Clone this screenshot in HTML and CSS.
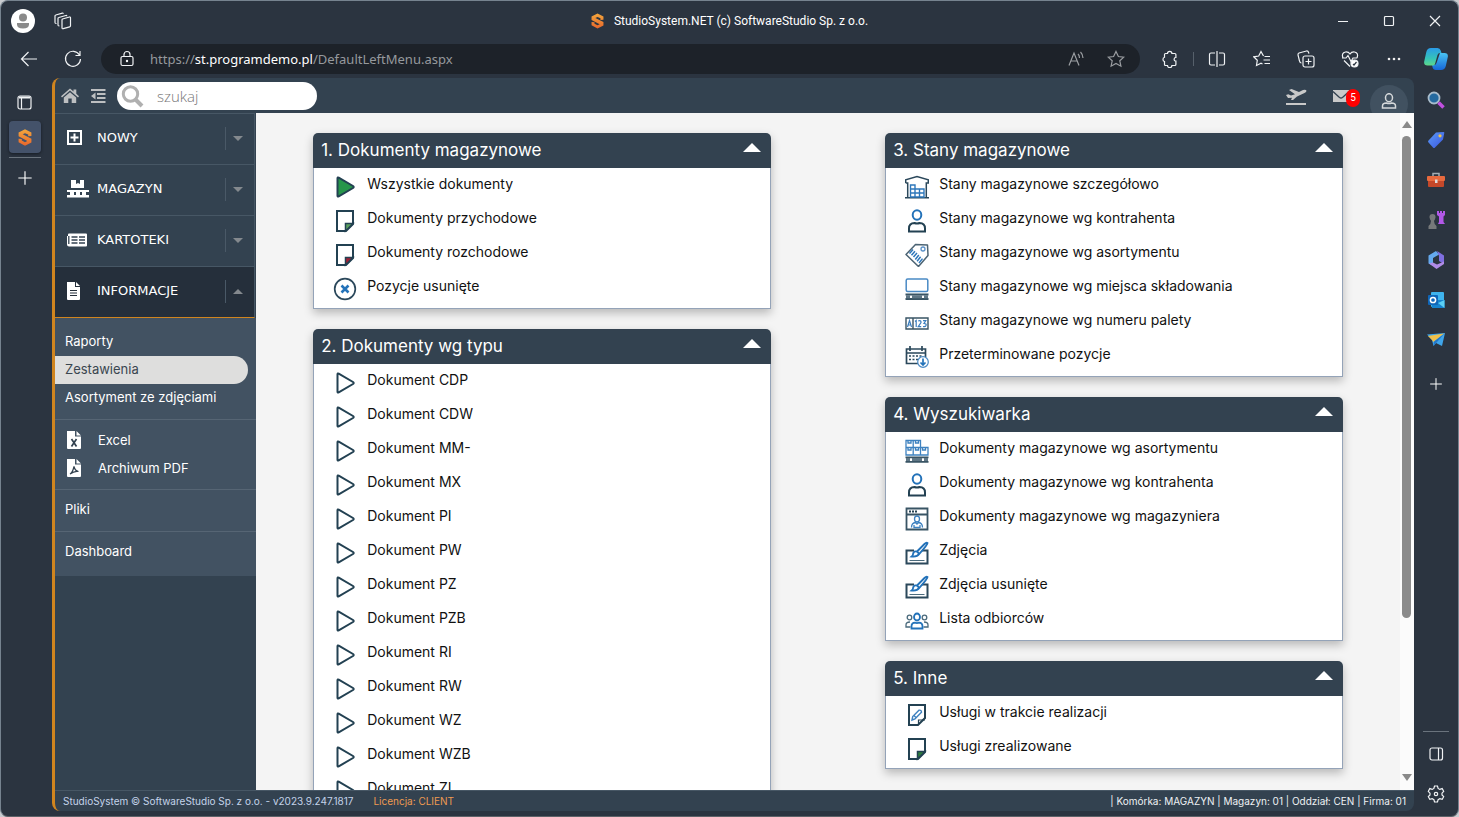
FILE: index.html
```html
<!DOCTYPE html>
<html lang="pl">
<head>
<meta charset="utf-8">
<title>StudioSystem.NET (c) SoftwareStudio Sp. z o.o.</title>
<link rel="stylesheet" href="styles.css">
</head>
<body>
<svg class="sprite" aria-hidden="true">
  <defs>
    <linearGradient id="gs" x1="0" y1="0" x2="0" y2="1"><stop offset="0" stop-color="#f3a73c"/><stop offset="1" stop-color="#e8662c"/></linearGradient>
    <linearGradient id="gcop1" x1="0" y1="0" x2="0" y2="1"><stop offset="0" stop-color="#2a9be8"/><stop offset=".6" stop-color="#35c3b8"/><stop offset="1" stop-color="#5fd88a"/></linearGradient>
    <linearGradient id="gcop2" x1="0" y1="0" x2="0" y2="1"><stop offset="0" stop-color="#49c4f2"/><stop offset="1" stop-color="#1667d8"/></linearGradient>
    <linearGradient id="gtag" x1="0" y1="0" x2="1" y2="1"><stop offset="0" stop-color="#5b9bf5"/><stop offset="1" stop-color="#3b55e0"/></linearGradient>
  </defs>
  <symbol id="logo" viewBox="0 0 24 28"><path fill="url(#gs)" d="M12 0l11 5.500v6l-5.500.5V9L12 6.500 8 8.500 23 16v6.500L12 28 1 22v-6l5.500.5V19l5.500 3 4-2L1 12V5.500z"/></symbol>
  <symbol id="play" viewBox="0 0 24 24"><path d="M4.500 3.300v17.400q0 1.300 1.200.6L20 13q1.400-1 0-2L5.700 2.700q-1.200-.7-1.200.6z" stroke="#234152" stroke-width="2"/></symbol>
  <symbol id="note" viewBox="0 0 24 24"><path fill="#fff" stroke="#234152" stroke-width="2" d="M4 2h16v13l-7 7H4z"/><path d="M12.500 22v-7.500H20z" stroke="#234152" stroke-width="1.500"/></symbol>
  <symbol id="cross" viewBox="0 0 24 24"><circle cx="12" cy="12" r="10.300" fill="none" stroke="#2b485b" stroke-width="1.700"/><path d="M8.500 8.500l7 7m0-7l-7 7" stroke="#2372b9" stroke-width="2.600"/></symbol>
  <symbol id="store" viewBox="0 0 24 24"><g fill="none"><path d="M.7 8V4.800L12 1.500l11.300 3.300V8h-2v14.500M.7 8h2v14.500M0 22.800h24" stroke="#2b485b" stroke-width="1.500"/><path d="M5.500 22V10h4.500v4h9v8zM10 14v8M14.500 14v8M5.500 14H10M5.500 18H19" stroke="#2e77ba" stroke-width="1.400"/></g></symbol>
  <symbol id="person" viewBox="0 0 24 24"><g fill="none" stroke-width="2"><ellipse cx="12" cy="6" rx="4.300" ry="4.700" stroke="#2372b9"/><path stroke="#234152" d="M4 22.500v-3q0-5.500 5.500-5.500 2.500 1.200 5 0 5.500 0 5.500 5.500v3z"/></g></symbol>
  <symbol id="tag" viewBox="0 0 24 24"><g fill="none"><path stroke="#4c6474" stroke-width="1.500" stroke-linejoin="round" d="M1 11.500L10.500 1.500l12 .5.500 10.500L13.500 23.500z"/><circle cx="18" cy="6" r="2" stroke="#5b91c8" stroke-width="1.300"/><path stroke="#2e77ba" stroke-width="1.500" d="M8 6.500l-3.500 4M10 8.300l-3.500 4M12 10l-3.500 4M13.800 12l-3.500 4.500M15.600 13.800l-3.500 4.500M17.500 15.600l-3.500 4.400"/></g></symbol>
  <symbol id="pallet" viewBox="0 0 24 24"><rect x="1.200" y="2" width="21.600" height="12.500" rx="1.500" fill="none" stroke="#4a8ac5" stroke-width="1.500"/><path stroke="#395464" d="M.5 17.500h23M.5 22h23" stroke-width="1.900"/><path stroke="#5f7685" stroke-width="3" d="M1 19.800h4M7 19.800h10M19 19.800h4"/></symbol>
  <symbol id="number" viewBox="0 0 24 24"><path fill="none" stroke="#395464" stroke-width="1.400" d="M1 7h22v11H1zM8 7v11"/><g fill="none" stroke="#3b7ebe" stroke-width="1.200"><path d="M2.500 16l2-6.500 2 6.500M3 14h3M10 10.500l1.200-1V16M13.200 10q3-1 2.800 1.500l-2.800 4.200h3M18 9.700h2.800L19 12.500q2.800 0 2 2-.7 1.600-3 1"/></g></symbol>
  <symbol id="calendar" viewBox="0 0 24 24"><g fill="none"><path stroke="#2b485b" stroke-width="1.700" d="M14 18.500H1.500V4h19v8M1.500 8h19M5 1v5M17 1v5"/><path stroke="#2b485b" stroke-width="1.700" stroke-dasharray="2 1.500" d="M4 11h14M4 14.500h9"/><circle cx="18" cy="17" r="5.300" fill="#fff" stroke="#4a8ac5" stroke-width="1.200"/><path stroke="#2372b9" stroke-width="1.700" d="M18 13.500V20M15.500 17.500L18 20l2.500-2.500"/></g></symbol>
  <symbol id="boxes" viewBox="0 0 24 24"><g fill="none"><path stroke="#3e82c0" stroke-width="1.300" d="M1 1.500h14.500v7H1zM1 8.500h22V16H1zM8.200 1.500V16M15.500 8.500V16M3 2v2h3V2M10.500 2v2h3V2M3 9v2h3V9M10.500 9v2h3V9M17.500 9v2h3V9"/><path stroke="#395464" stroke-width="1.700" d="M.5 18.300h23M.5 22.800h23"/><path stroke="#5f7685" stroke-width="3" d="M1 20.600h4M7 20.600h10M19 20.600h4"/></g></symbol>
  <symbol id="window" viewBox="0 0 24 24"><g fill="none"><path stroke="#395464" stroke-width="1.800" d="M1.500 1.500h21v21h-21zM1.500 7.500h21"/><path stroke="#234152" stroke-width="2" stroke-dasharray="2 1" d="M4 4.500h8"/><ellipse cx="12" cy="12" rx="2.500" ry="3" stroke="#3e82c0" stroke-width="1.300"/><path stroke="#3e82c0" stroke-width="1.300" d="M6.500 20.500q0-4.500 4-5l1.500 1.500 1.500-1.500q4 .5 4 5M9 18v2.500h6V18"/></g></symbol>
  <symbol id="photo" viewBox="0 0 24 24"><g fill="none"><path stroke="#2b485b" stroke-width="2" d="M9 9.500H1.500v13h21v-13H17"/><path stroke="#4a6a7c" d="M4.500 19.500h15"/><path stroke="#2372b9" stroke-width="1.900" d="M12 10.500L19.500 3q1.800-1.800 3-1 .3 1.500-8.200 10.800zM12 10.500q-3.300-.7-3.800 2-.2 2-1.500 3 5.500.7 7.500-2.700z"/></g></symbol>
  <symbol id="group" viewBox="0 0 24 24"><g fill="none"><g stroke="#4a6a7c" stroke-width="1.300"><circle cx="4.500" cy="8.500" r="2.300"/><circle cx="19.500" cy="8.500" r="2.300"/><path d="M5.500 18H1v-2q0-3 4-3M18.500 18H23v-2q0-3-4-3"/></g><g stroke="#2372b9" stroke-width="1.800"><ellipse cx="12" cy="8" rx="3" ry="3.500"/><path d="M6.500 19.500v-2q0-3.800 3.500-3.800 2 .8 4 0 3.500 0 3.500 3.800v2z"/></g></g></symbol>
  <symbol id="edit" viewBox="0 0 24 24"><g fill="none"><path stroke="#234152" stroke-width="2" d="M4 2h16v13l-7 7H4z"/><path stroke="#234152" stroke-width="1.200" d="M13.500 22v-5H20"/><path stroke="#3e82c0" stroke-width="1.400" d="M7 17l.7-3.500L14 7.200q2.500-.5 2.500 2L10 15.800zM9 12.500l2.200 2.200"/></g></symbol>
  <symbol id="plus" viewBox="0 0 24 24"><path fill="none" stroke="currentColor" stroke-width="1.700" d="M12 2v20M2 12h20"/></symbol>
</svg>

<div class="window">
  <header class="titlebar">
    <div class="title-left">
      <button class="avatar" aria-label="Profil"><svg viewBox="0 0 24 24"><circle cx="12" cy="8.500" r="4" fill="#8a8a8a"/><path fill="#8a8a8a" d="M6 14h12v1.500q0 4-6 4t-6-4z"/></svg></button>
      <button class="plain" aria-label="Obszary robocze"><svg class="i18 line" viewBox="0 0 18 18"><path d="M8.500 7l7-2q1-.2 1 .8v8q0 .8-.8 1l-6.500 1.900q-1.200.3-1.200-.9V8q0-.8.500-1zM5.500 14l-1-.3q-.5-.2-.5-1V6.500q0-.8.800-1l7-2q1-.2 1 .7M2.500 11.500l-1-.3q-.5-.2-.5-1V4q0-.8.800-1l6.500-1.900q1-.2 1 .7"/></svg></button>
    </div>
    <div class="title-mid"><svg class="title-logo"><use href="#logo"/></svg><span>StudioSystem.NET (c) SoftwareStudio Sp. z o.o.</span></div>
    <div class="title-right">
      <button class="plain" aria-label="Minimalizuj"><svg class="i12 line" viewBox="0 0 12 12"><path d="M1 6.500h10"/></svg></button>
      <button class="plain" aria-label="Maksymalizuj"><svg class="i12 line" viewBox="0 0 12 12"><rect x="1.500" y="1.500" width="9" height="9" rx="1"/></svg></button>
      <button class="plain" aria-label="Zamknij"><svg class="i12 line" viewBox="0 0 12 12"><path d="M1 1l10 10M11 1L1 11"/></svg></button>
    </div>
  </header>

  <nav class="toolbar">
    <button class="plain" aria-label="Wstecz"><svg class="i18 line" viewBox="0 0 18 18"><path d="M17 9H2M8.500 2L1.500 9l7 7"/></svg></button>
    <button class="plain" aria-label="Odśwież"><svg class="i18 line" viewBox="0 0 18 18"><path d="M15.500 5A7.500 7.500 0 1 0 16.500 9M16 1v4.500h-4.500"/></svg></button>
    <div class="address">
      <svg class="i18 line" viewBox="0 0 18 18"><rect x="3" y="6.500" width="12" height="9" rx="1.500"/><path d="M6 6.500V4.500a3 3 0 0 1 6 0v2"/><circle cx="9" cy="11" r=".6"/></svg>
      <div class="url">https://<b>st.programdemo.pl</b>/DefaultLeftMenu.aspx</div>
      <svg class="i18 line dim" viewBox="0 0 18 18"><path d="M2 15.500L7 3l5 12.500M3.800 11h6.400M11 4q1.500 1.500 1.500 4M13.500 2q2.500 2.500 2.500 6"/></svg>
      <svg class="i18 line dim" viewBox="0 0 18 18"><path d="M9 1.500l2.400 5 5.400.6-4 3.700 1.100 5.400L9 13.500l-4.900 2.700 1.100-5.400-4-3.700 5.400-.6z"/></svg>
    </div>
    <div class="tools">
      <button class="plain ext" aria-label="Rozszerzenia"><svg class="i18 line" viewBox="0 0 18 18"><path d="M6.500 3.500a2.200 2.200 0 0 1 4.400 0h3q1 0 1 1v3a1.800 1.800 0 1 0 0 3.600v3.400q0 1-1 1h-3a2.200 2.200 0 0 1-4.400 0h-2q-1 0-1-1v-3a2.200 2.200 0 0 1 0-4.200V4.500q0-1 1-1z"/></svg></button>
      <button class="plain" aria-label="Podziel ekran"><svg class="i18 line" viewBox="0 0 18 18"><path d="M7 3H3q-1.500 0-1.500 1.500v9Q1.500 15 3 15h4M11 3h4q1.500 0 1.500 1.500v9Q16.500 15 15 15h-4M9 1v16"/></svg></button>
      <button class="plain" aria-label="Ulubione"><svg class="i18 line" viewBox="0 0 18 18"><path d="M10.500 6L8 1.500 5.700 6l-5 .8 3.600 3.500-.8 5.200 4.500-2.300 1.500.8M11.500 6.500H17M10.500 10H17M11.500 13.500H17"/></svg></button>
      <button class="plain" aria-label="Kolekcje"><svg class="i18 line" viewBox="0 0 18 18"><rect x="6" y="6" width="11" height="11" rx="2"/><path d="M11.500 8.500v6M8.500 11.500h6M4.500 13Q3 13 2.500 11L1 5q-.2-1.500 1-2l7.500-2q1.500-.2 2 1.200l.4 1.500"/></svg></button>
      <button class="plain" aria-label="Wydajność"><svg class="i18 line" viewBox="0 0 18 18"><path d="M2 8Q0 3 4.500 2 7.500 1.700 9 4q1.500-2.300 4.500-2Q18 3 16 8M1 8h4l2-2.500 3 6L12 8h4M3 10.500l6 6"/><circle cx="13.500" cy="13.500" r="3.500" fill="#fff"/><path stroke="#2b3440" d="M12 14l1 1 2.500-3"/></svg></button>
      <button class="plain" aria-label="Więcej"><svg class="i18" viewBox="0 0 18 18"><g fill="#eee"><circle cx="4" cy="9" r="1.300"/><circle cx="9" cy="9" r="1.300"/><circle cx="14" cy="9" r="1.300"/></g></svg></button>
      <button class="plain copilot" aria-label="Copilot"><svg viewBox="0 0 24 24"><path fill="url(#gcop2)" d="M16 6h4.500q4 0 3.300 4l-2 9q-.9 4-4.800 4h-5q-3 0-3.500-3l-.5-2h2q2 0 2.500-2z"/><path fill="url(#gcop1)" d="M7 1h6.500q2.500 0 3.200 2.500l.8 2.500H16q-2 0-2.500 2l-2.500 9q-.5 1.500-2 1.500H3.500Q-.5 18.500.2 14.500L2.300 5Q3.200 1 7 1z"/></svg></button>
    </div>
  </nav>

  <div class="workspace">
    <aside class="rail">
      <button class="plain" aria-label="Karty pionowe"><svg class="i18 line" viewBox="0 0 18 18"><rect x="2" y="2" width="13" height="13" rx="2"/><path d="M3 3.500h11" stroke-width="2"/><path d="M5.500 4v11"/></svg></button>
      <button class="tab" aria-label="StudioSystem.NET"><svg><use href="#logo"/></svg></button>
      <span class="rule"></span>
      <button class="plain" aria-label="Nowa karta"><svg class="i16"><use href="#plus"/></svg></button>
    </aside>

    <div class="app">
      <header class="app-head">
        <a href="#" aria-label="Start"><svg class="i18" viewBox="0 0 18 18"><path fill="#bdbfc1" d="M0 9.200L9 1.500l3.500 3V2.500h2.800v4.300L18 9.200l-1 1.200-8-6.800-8 6.800zM9 5.200l6.200 5.300V16h-4.500v-4.500H7.300V16H2.800v-5.500z"/></svg></a>
        <a href="#" aria-label="Zwiń menu"><svg class="i16" viewBox="0 0 16 16"><path fill="none" stroke="#bdbfc1" stroke-width="2" d="M1 2h14.500M7 6h8.500M7 10h8.500M1 14h14.500"/><path fill="#bdbfc1" d="M5.500 4.500v7L1 8z"/></svg></a>
        <label class="search"><svg class="i24" viewBox="0 0 24 24"><circle cx="9.500" cy="10" r="7.200" fill="none" stroke="#b0b0b0" stroke-width="3"/><path stroke="#b0b0b0" stroke-width="4" d="M14.500 15.500l6.500 6.500"/></svg><input type="text" placeholder="szukaj" aria-label="szukaj"></label>
        <div class="head-right">
          <a href="#" aria-label="Odlot"><svg class="i24" viewBox="0 0 24 24"><path stroke="#c9c9c9" stroke-width="2" d="M2 20h20"/><path fill="#c9c9c9" d="M2 11l2.300-.7L7 11.500l4-1.300L5 6l2.500-1L15 8l4-2q3-.8 3.500.8 0 1.200-2 2.200L13 12.500l-4 3.500H7l1-2.200-4 .2z"/></svg></a>
          <a href="#" class="mail" aria-label="Wiadomości"><svg class="i16" viewBox="0 0 16 16"><path fill="#c9c9c9" d="M0 2h16v12H0z"/><path fill="none" stroke="#334250" stroke-width="1.300" d="M0 3.500l6.500 6q1.500 1 3 0l6.500-6"/></svg><span class="badge">5</span></a>
          <a href="#" class="user" aria-label="Konto"><svg class="i16" viewBox="0 0 16 16"><g fill="none" stroke="#d5d8da" stroke-width="1.500"><ellipse cx="8" cy="4.700" rx="3.500" ry="4"/><path d="M1.500 15v-2q0-3 4-3 2.500 1 5 0 4 0 4 3v2z"/></g></svg></a>
        </div>
      </header>

      <nav class="menu">
        <button class="item"><svg class="i18" viewBox="0 0 18 18"><path fill="none" stroke="#fff" stroke-width="2" d="M1 2h13v13H1zM7.500 4.500v8M3.500 8.500h8"/></svg><span>NOWY</span><i></i></button>
        <button class="item"><svg class="wide" viewBox="0 0 22 18"><path fill="#fff" d="M4 0h5v4l2-1 2 1V0h4v8H4zM0 10h22v2H0zM3 12h4v3H3zM9 12h4v3H9zM15 12h4v3h-4zM0 15h22v2.500H0z"/></svg><span>MAGAZYN</span><i></i></button>
        <button class="item"><svg class="wide" viewBox="0 0 22 18"><path fill="#fff" d="M2 2.500h17q1 0 1 1v11q0 1-1 1H2q-2 0-2-2V5h1V3.500q0-1 1-1z"/><path stroke="#334250" stroke-width="1.300" d="M4.500 6h6M4.500 9h6M4.500 12h6M12 6h6M12 9h6M12 12h6M1.800 5v8"/></svg><span>KARTOTEKI</span><i></i></button>
        <button class="item open"><svg class="i18" viewBox="0 0 18 18"><path fill="#fff" d="M0 0h8v5h5v12q0 1-1 1H1q-1 0-1-1zM9 0l4 4H9z"/><path stroke="#252f3b" d="M3 8.500h7M3 11h7M3 13.500h7"/></svg><span>INFORMACJE</span><i></i></button>
        <div class="submenu">
          <a href="#">Raporty</a>
          <a href="#" class="current">Zestawienia</a>
          <a href="#">Asortyment ze zdjęciami</a>
          <hr>
          <a href="#" class="iconed"><svg viewBox="0 0 14 18"><path fill="#fff" d="M0 0h8v5.500h6V17q0 1-1 1H1q-1 0-1-1zM9.500 0L14 4.500H9.500z"/><path stroke="#334250" stroke-width="1.700" d="M4.500 8l5 7.500M9.500 8l-5 7.500"/></svg>Excel</a>
          <a href="#" class="iconed"><svg viewBox="0 0 14 18"><path fill="#fff" d="M0 0h8v5.500h6V17q0 1-1 1H1q-1 0-1-1zM9.500 0L14 4.500H9.500z"/><path fill="none" stroke="#334250" stroke-width="1.200" d="M3 15q2.500-1 4-7.500 1 4.500 4.500 5-4-.8-8.500 2.500z"/></svg>Archiwum PDF</a>
          <hr>
          <a href="#">Pliki</a>
          <hr>
          <a href="#">Dashboard</a>
        </div>
      </nav>

      <main class="content">
        <div class="column">
          <section class="panel">
            <h2>1. Dokumenty magazynowe<button aria-label="Zwiń"></button></h2>
            <ul>
              <li><a href="#"><svg class="green"><use href="#play"/></svg>Wszystkie dokumenty</a></li>
              <li><a href="#"><svg class="leaf"><use href="#note"/></svg>Dokumenty przychodowe</a></li>
              <li><a href="#"><svg class="red"><use href="#note"/></svg>Dokumenty rozchodowe</a></li>
              <li><a href="#"><svg><use href="#cross"/></svg>Pozycje usunięte</a></li>
            </ul>
          </section>
          <section class="panel">
            <h2>2. Dokumenty wg typu<button aria-label="Zwiń"></button></h2>
            <ul>
              <li><a href="#"><svg><use href="#play"/></svg>Dokument CDP</a></li>
              <li><a href="#"><svg><use href="#play"/></svg>Dokument CDW</a></li>
              <li><a href="#"><svg><use href="#play"/></svg>Dokument MM-</a></li>
              <li><a href="#"><svg><use href="#play"/></svg>Dokument MX</a></li>
              <li><a href="#"><svg><use href="#play"/></svg>Dokument PI</a></li>
              <li><a href="#"><svg><use href="#play"/></svg>Dokument PW</a></li>
              <li><a href="#"><svg><use href="#play"/></svg>Dokument PZ</a></li>
              <li><a href="#"><svg><use href="#play"/></svg>Dokument PZB</a></li>
              <li><a href="#"><svg><use href="#play"/></svg>Dokument RI</a></li>
              <li><a href="#"><svg><use href="#play"/></svg>Dokument RW</a></li>
              <li><a href="#"><svg><use href="#play"/></svg>Dokument WZ</a></li>
              <li><a href="#"><svg><use href="#play"/></svg>Dokument WZB</a></li>
              <li><a href="#"><svg><use href="#play"/></svg>Dokument ZL</a></li>
            </ul>
          </section>
        </div>
        <div class="column">
          <section class="panel">
            <h2>3. Stany magazynowe<button aria-label="Zwiń"></button></h2>
            <ul>
              <li><a href="#"><svg><use href="#store"/></svg>Stany magazynowe szczegółowo</a></li>
              <li><a href="#"><svg><use href="#person"/></svg>Stany magazynowe wg kontrahenta</a></li>
              <li><a href="#"><svg><use href="#tag"/></svg>Stany magazynowe wg asortymentu</a></li>
              <li><a href="#"><svg><use href="#pallet"/></svg>Stany magazynowe wg miejsca składowania</a></li>
              <li><a href="#"><svg><use href="#number"/></svg>Stany magazynowe wg numeru palety</a></li>
              <li><a href="#"><svg><use href="#calendar"/></svg>Przeterminowane pozycje</a></li>
            </ul>
          </section>
          <section class="panel">
            <h2>4. Wyszukiwarka<button aria-label="Zwiń"></button></h2>
            <ul>
              <li><a href="#"><svg><use href="#boxes"/></svg>Dokumenty magazynowe wg asortymentu</a></li>
              <li><a href="#"><svg><use href="#person"/></svg>Dokumenty magazynowe wg kontrahenta</a></li>
              <li><a href="#"><svg><use href="#window"/></svg>Dokumenty magazynowe wg magazyniera</a></li>
              <li><a href="#"><svg><use href="#photo"/></svg>Zdjęcia</a></li>
              <li><a href="#"><svg><use href="#photo"/></svg>Zdjęcia usunięte</a></li>
              <li><a href="#"><svg><use href="#group"/></svg>Lista odbiorców</a></li>
            </ul>
          </section>
          <section class="panel">
            <h2>5. Inne<button aria-label="Zwiń"></button></h2>
            <ul>
              <li><a href="#"><svg><use href="#edit"/></svg>Usługi w trakcie realizacji</a></li>
              <li><a href="#"><svg class="forest"><use href="#note"/></svg>Usługi zrealizowane</a></li>
            </ul>
          </section>
        </div>
      </main>
      <div class="scroll"><span class="up"></span><span class="track"><span class="thumb"></span></span><span class="down"></span></div>

      <footer class="status">
        <span>StudioSystem © SoftwareStudio Sp. z o.o. - v2023.9.247.1817</span>
        <span class="licence">Licencja: CLIENT</span>
        <span class="place">| Komórka: MAGAZYN | Magazyn: 01 | Oddział: CEN | Firma: 01</span>
      </footer>
    </div>

    <aside class="edge">
      <button class="plain" aria-label="Szukaj"><svg class="i18" viewBox="0 0 18 18"><circle cx="7" cy="7" r="5.500" fill="#256aa0" stroke="#a9bccb" stroke-width="1.800"/><path stroke="#c14fe0" stroke-width="3.500" d="M11.500 11.500l5 5"/></svg></button>
      <button class="plain" aria-label="Zakupy"><svg class="i18" viewBox="0 0 18 18"><path fill="url(#gtag)" d="M9 1.500L16.500 1q1 0 .8 1L16 8.500l-8 8q-1 1-2 0l-4.500-5q-1-1 0-2z"/><circle cx="13" cy="4.800" r="1.600" fill="#f5c542"/></svg></button>
      <button class="plain" aria-label="Narzędzia"><svg class="i18" viewBox="0 0 18 18"><path fill="none" stroke="#a5adb3" stroke-width="1.500" d="M6 5V2.500h6V5"/><rect y="5" width="18" height="5" rx="1" fill="#e86a3e"/><path fill="#c4482a" d="M1 10h16v5q0 1-1 1H2q-1 0-1-1z"/><rect x="8" y="8.500" width="2.500" height="3.500" fill="#ddd"/></svg></button>
      <button class="plain" aria-label="Gry"><svg class="i18" viewBox="0 0 18 18"><path fill="#b258e8" d="M10 0h2v2h1V0h2v2h1V0h2v4l-1.500 1.500V11l1.500 2h-7l1-2V5.500L10 4z"/><circle cx="5.500" cy="6" r="3" fill="#77797a"/><path fill="#77797a" d="M3 8h5l-1 2q0 3 2.500 5v3h-8v-3Q4 13 4 10z"/></svg></button>
      <button class="plain" aria-label="Microsoft 365"><svg class="i18" viewBox="0 0 18 18"><path fill="#64a9ee" d="M9 0L1.500 4.500v8L6 15V7l6-3.500z"/><path fill="#7f6fe0" d="M10 0l7 4.500V13L12 10V5z"/><path fill="#b08be8" d="M2 12.500l4-1 4 2 7-3V13l-7.500 5z"/></svg></button>
      <button class="plain" aria-label="Outlook"><svg class="i18" viewBox="0 0 18 18"><rect x="4" y="1" width="13" height="15" rx="1" fill="#3fb4ee"/><path fill="#1583cf" d="M5 9h12.500v8H5z"/><path fill="#5bd0f5" d="M11 12l6.500-3v8z"/><rect x="1" y="4" width="10" height="10" rx="1" fill="#0f66b8"/><circle cx="6" cy="9" r="2.600" fill="none" stroke="#fff" stroke-width="1.500"/></svg></button>
      <button class="plain" aria-label="Drop"><svg class="i18" viewBox="0 0 18 18"><path fill="#3fa5ea" d="M0 3.500L18 2 15 15l-6-3-2.500 3L5 9z"/><path fill="#f0c04a" d="M1 5l16-2.500L6.500 11 5 9z"/><path fill="#2477c9" d="M17.500 2.500L6.500 15 7 10.500z"/></svg></button>
      <button class="plain add" aria-label="Dostosuj"><svg class="i14"><use href="#plus"/></svg></button>
      <span class="rule"></span>
      <button class="plain" aria-label="Pasek boczny"><svg class="i18 line" viewBox="0 0 18 18"><rect x="3" y="3" width="12.500" height="12" rx="2"/><path d="M11.500 3v12"/></svg></button>
      <button class="plain" aria-label="Ustawienia"><svg class="i18 line" viewBox="0 0 18 18"><path d="M7.500 1h3l.6 2.400 1.700 1 2.400-.8 1.500 2.700L15 8.200v1.700l1.700 1.800-1.500 2.700-2.400-.7-1.700 1-.6 2.300h-3l-.6-2.300-1.700-1-2.400.7-1.500-2.700L3 9.900V8.200L1.300 6.300l1.500-2.700 2.400.8 1.700-1z"/><circle cx="9" cy="9" r="1.700"/></svg></button>
    </aside>
  </div>
</div>
</body>
</html>
```
FILE: styles.css
```css
* { box-sizing: border-box; }

:root {
  --chrome: #2b3440;
  --navy: #334250;
  --slate: #425262;
  --orange: #d0851f;
  --ui: "Open Sans", sans-serif;
  --text: Inter, sans-serif;
}

body {
  margin: 0;
  background: #c9ccd0;
  font-family: var(--text);
}

.sprite {
  position: absolute;
  width: 0;
  height: 0;
}

svg { display: block; flex: none; }
a { color: inherit; text-decoration: none; }
button {
  border: 0;
  padding: 0;
  background: none;
  color: inherit;
  font: inherit;
}

.i12 { width: 12px; height: 12px; }
.i14 { width: 14px; height: 14px; }
.i16 { width: 16px; height: 16px; }
.i18 { width: 18px; height: 18px; }
.i24 { width: 24px; height: 24px; }
.line { fill: none; stroke: #f0f2f4; stroke-width: 1.2; }
.dim { stroke: #9a9da1; }

.plain {
  display: flex;
  align-items: center;
  justify-content: center;
}

.window {
  display: flex;
  flex-direction: column;
  height: 100vh;
  border: 1px solid #76838f;
  border-bottom-color: #5d6268;
  border-radius: 8px;
  overflow: hidden;
  background: var(--chrome);
  color: #fff;
}

/* Title bar */
.titlebar {
  display: grid;
  grid-template-columns: 1fr auto 1fr;
  align-items: center;
  height: 39px;
}
.title-left {
  display: flex;
  align-items: center;
  gap: 19px;
  padding-left: 10px;
}
.avatar {
  width: 24px;
  height: 24px;
  border-radius: 50%;
  background: #fff;
}
.title-mid {
  display: flex;
  align-items: center;
  gap: 10px;
  font: 12px/16px Roboto, sans-serif;
}
.title-logo { width: 13px; height: 16px; }
.title-right { display: flex; justify-content: flex-end; }
.title-right .plain { width: 46px; height: 38px; }

/* Browser toolbar */
.toolbar {
  display: flex;
  align-items: center;
  height: 38px;
  padding-left: 6px;
}
.toolbar > .plain { width: 44px; height: 30px; }
.address {
  display: flex;
  align-items: center;
  flex: 1;
  gap: 22px;
  height: 30px;
  margin-left: 6px;
  padding: 0 15px 0 17px;
  border-radius: 15px;
  background: #1d2229;
}
.url {
  flex: 1;
  margin-left: -8px;
  color: #96999d;
  font: 13px/20px "Noto Sans", sans-serif;
}
.url b { color: #fff; font-weight: 400; }
.tools { display: flex; align-items: center; padding: 0 2px 0 6px; }
.tools .plain { width: 44px; height: 30px; }
.tools .ext {
  width: 48px;
  height: 14px;
  border-right: 1px solid #56606b;
}
.tools .ext + .plain { width: 46px; }
.tools .copilot { width: 40px; }
.copilot svg { width: 24px; height: 24px; }

/* Body below the browser chrome */
.workspace {
  display: grid;
  grid-template-columns: 51px 1fr 44px;
  flex: 1;
  min-height: 0;
  padding-bottom: 5px;
}
.rail {
  display: flex;
  flex-direction: column;
  align-items: center;
  padding: 16px 4px 0 0;
}
.tab {
  display: grid;
  place-items: center;
  width: 32px;
  height: 32px;
  margin-top: 9px;
  border-radius: 4px;
  background: #44526a;
  box-shadow: 0 1px 3px #161c24;
}
.tab svg { width: 14px; height: 17px; }
.rule { width: 32px; height: 1px; background: #6a737d; }
.rail .rule { margin: 4px 0 12px; }

.app {
  display: grid;
  grid-template: 35px 1fr 21px / 201px 1fr 14px;
  min-width: 0;
  min-height: 0;
  border-left: 3px solid var(--orange);
  border-radius: 8px;
  overflow: hidden;
  background: var(--navy);
}

/* Application header */
.app-head {
  display: flex;
  grid-column: 1 / -1;
  align-items: center;
  gap: 11px;
  padding: 1px 6px 0;
  overflow: hidden;
}
.search {
  display: flex;
  align-items: center;
  gap: 12px;
  width: 200px;
  height: 28px;
  padding-left: 4px;
  border-radius: 14px;
  background: #fff;
}
.search input {
  width: 140px;
  border: 0;
  padding: 0;
  outline: 0;
  background: none;
  font: 300 15px/20px "Open Sans", sans-serif;
}
.search input::placeholder { color: #777; opacity: 1; }
.head-right {
  display: flex;
  align-items: center;
  gap: 25px;
  height: 34px;
  margin-left: auto;
}
.mail { position: relative; margin-right: 12px; }
.badge {
  position: absolute;
  top: 1px;
  left: 13px;
  width: 14px;
  border-radius: 7px;
  background: #f00;
  font: 10px/18px Roboto, sans-serif;
  text-align: center;
}
.user {
  display: grid;
  place-items: center;
  align-self: flex-start;
  width: 38px;
  height: 38px;
  margin: 6px 0 0 -16px;
  padding-bottom: 6px;
  border-radius: 50%;
  background: #415160;
}

/* Sidebar */
.menu { min-height: 0; overflow: hidden; }
.item {
  display: flex;
  align-items: center;
  width: 200px;
  height: 51px;
  padding: 0 11px 2px 12px;
  border-top: 1px solid #475765;
  border-right: 1px solid #475765;
  font: 13px/20px "DejaVu Sans", sans-serif;
  text-align: left;
}
.item svg { margin-right: 12px; }
.item .wide { width: 22px; height: 18px; margin-right: 8px; }
.item span { flex: 1; }
.item i {
  display: grid;
  place-items: center end;
  width: 18px;
  height: 23px;
  border-left: 1px solid #4a5967;
}
.item i::after {
  border: 5px solid transparent;
  border-top-color: #84898e;
  border-bottom: 0;
  content: "";
}
.item.open {
  height: 52px;
  border-bottom: 1px solid var(--orange);
  background: #252f3b;
}
.item.open i::after {
  border-top: 0;
  border-bottom: 5px solid #84898e;
}
.submenu {
  display: flex;
  flex-direction: column;
  padding: 10px 0;
  background: var(--slate);
  font-size: 13px;
  line-height: 27px;
}
.submenu a { height: 28px; padding-left: 10px; }
.submenu .current {
  margin-right: 8px;
  border-radius: 0 14px 14px 0;
  background: #dededd;
  color: #3a4650;
}
.submenu hr {
  width: 100%;
  height: 1px;
  margin: 7px 0 6px;
  border: 0;
  background: #566574;
}
.submenu .iconed {
  display: flex;
  align-items: center;
  gap: 17px;
  padding-left: 12px;
}
.iconed svg { width: 14px; height: 18px; }

/* Panels */
.content {
  display: grid;
  grid-template-columns: 1fr 1fr;
  min-height: 0;
  overflow: hidden;
  background: #f4f4f4;
  color: #111;
}
.panel {
  width: 80%;
  margin: 20px auto;
  border-radius: 5px 5px 0 0;
  background: #fff;
  box-shadow: 0 4px 10px rgba(0, 0, 0, .25);
}
.panel h2 {
  display: flex;
  justify-content: space-between;
  height: 35px;
  margin: 0;
  padding: 0 10px 0 8px;
  border-radius: 5px 5px 0 0;
  background: var(--navy);
  color: #fff;
  font-size: 17px;
  font-weight: 400;
  line-height: 35px;
}
.panel h2 button {
  width: 0;
  height: 0;
  margin-top: 10px;
  border: 9px solid transparent;
  border-top: 0;
  border-bottom-color: #fff;
}
.panel ul {
  margin: 0;
  padding: 0 0 4px;
  border: 1px solid #94a3b8;
  border-top: 0;
  list-style: none;
}
.panel li a {
  display: flex;
  gap: 10px;
  height: 34px;
  padding: 7px 0 0 19px;
  font-size: 14px;
  line-height: 17px;
}
.panel li svg {
  width: 24px;
  height: 24px;
  fill: #fff;
}
.panel li .green { fill: #27964a; }
.panel li .leaf { fill: #5ba05d; }
.panel li .red { fill: #a01f35; }
.panel li .forest { fill: #2e7d3c; }

.scroll {
  display: flex;
  flex-direction: column;
  align-items: center;
  padding: 8px 1px 9px 0;
  background: #fbfbfb;
}
.up, .down { border: 5px solid transparent; }
.up { border-top: 0; border-bottom: 7px solid #8a8a8a; }
.down { border-bottom: 0; border-top: 7px solid #8a8a8a; }
.track { flex: 1; width: 9px; padding: 8px 0 4px; }
.thumb {
  display: block;
  height: 76%;
  border-radius: 5px;
  background: #8b8b8b;
}

/* Status bar */
.status {
  display: flex;
  grid-column: 1 / -1;
  align-items: center;
  gap: 20px;
  padding: 0 8px;
  border-top: 1px solid #475765;
  color: #c3d3ea;
  font-size: 10px;
  line-height: 20px;
}
.licence { color: #ee9a50; }
.place { margin-left: auto; color: #eef1f4; }

/* Browser side strip */
.edge {
  display: flex;
  flex-direction: column;
  align-items: center;
  gap: 22px;
  padding: 13px 0 8px;
}
.add { margin-top: 6px; }
.edge .rule { width: 26px; margin-top: auto; margin-bottom: -9px; }
```
